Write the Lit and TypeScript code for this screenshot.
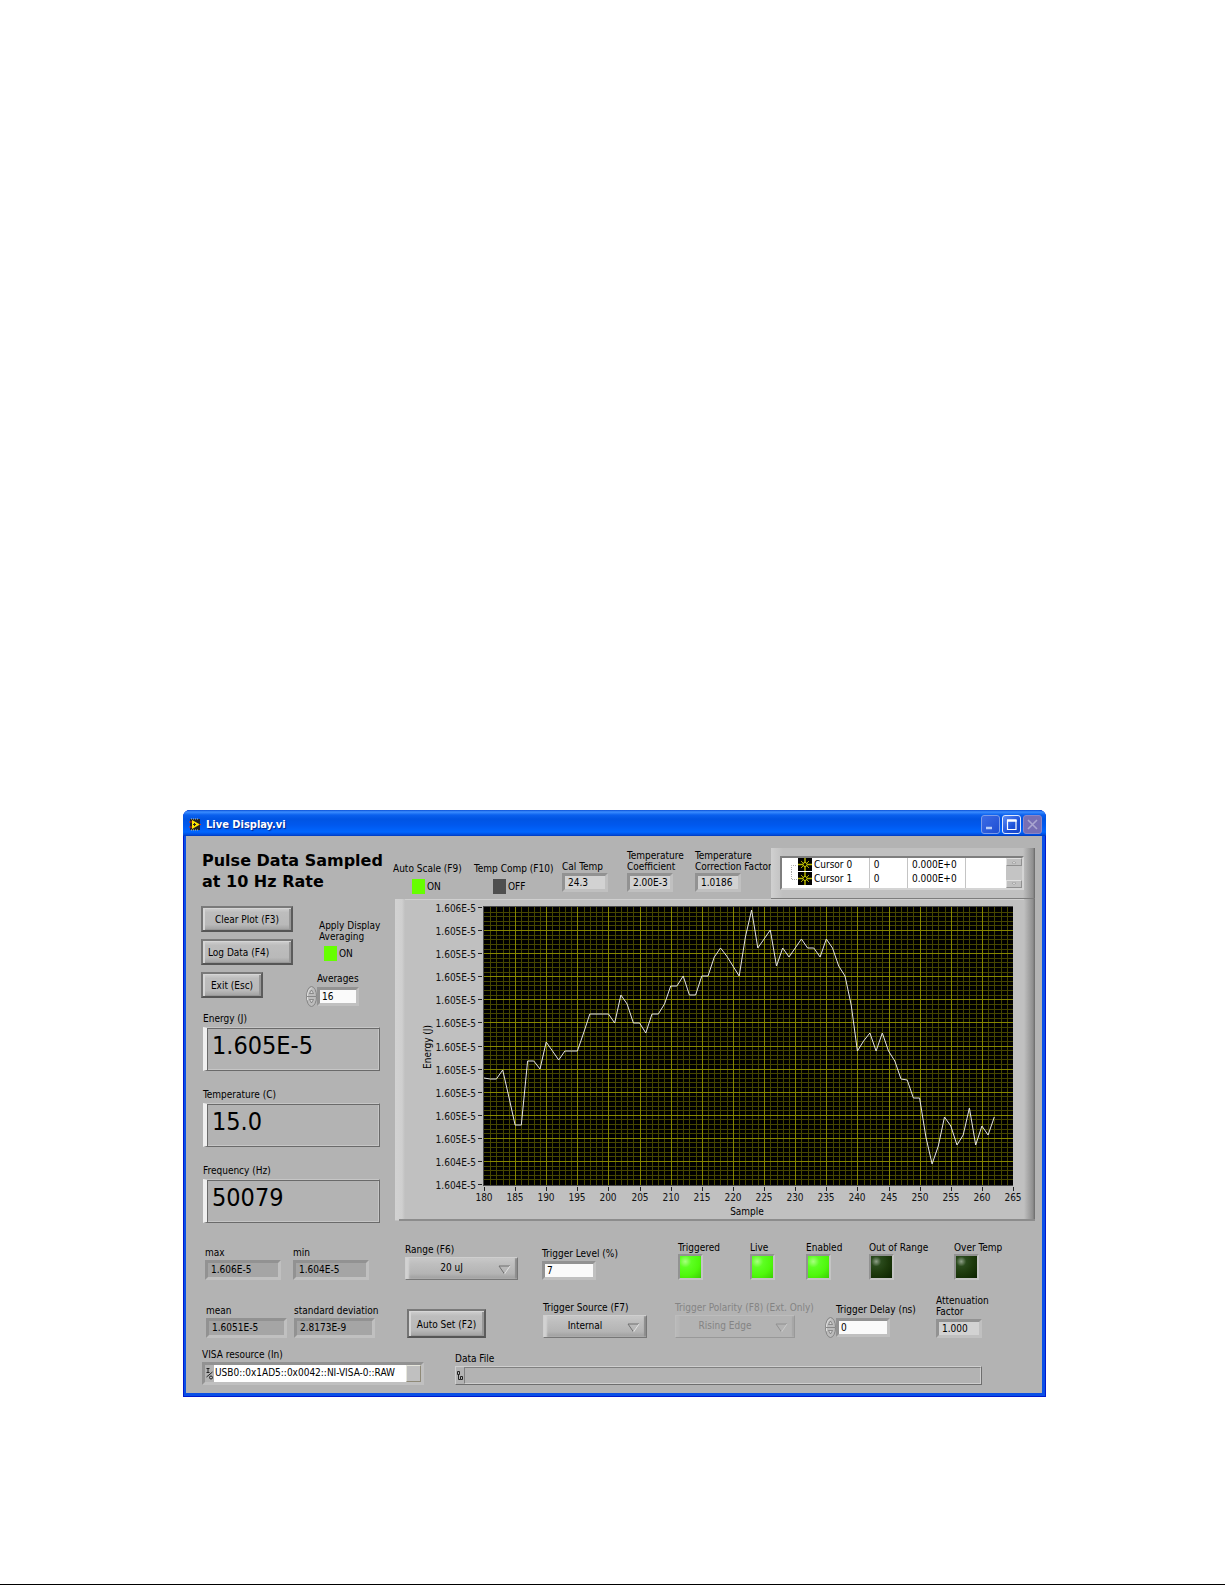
import { LitElement, html, svg, css, nothing } from "lit";
import { customElement, property } from "lit/decorators.js";

const SAMPLES: number[] = [
  179, 180, 180, 171, 198, 226, 226, 162, 162, 170, 143, 152, 161, 152, 152, 152, 134, 115, 115, 115,
  115, 124, 96, 105, 124, 124, 134, 115, 115, 105, 87, 87, 77, 96, 96, 77, 77, 58, 49, 57,
  67, 77, 38, 11, 49, 40, 31, 67, 49, 58, 49, 40, 49, 49, 58, 40, 49, 67, 77, 106,
  152, 142, 134, 152, 134, 152, 162, 180, 181, 199, 199, 238, 265, 247, 218, 227, 246, 236, 209, 246,
  227, 236, 218,
];

const Y_LABELS = [
  "1.606E-5", "1.605E-5", "1.605E-5", "1.605E-5", "1.605E-5", "1.605E-5", "1.605E-5",
  "1.605E-5", "1.605E-5", "1.605E-5", "1.605E-5", "1.604E-5", "1.604E-5",
];

const PLOT = { left: 89, right: 618, top: 8, bottom: 286 };

@customElement("energy-chart")
export class EnergyChart extends LitElement {
  static styles = css`
    :host { display: block; }
    .chart { display: block; width: 100%; height: auto; }
    .tick-label { font-family: "DejaVu Sans Condensed", "DejaVu Sans", sans-serif; font-size: 10px; fill: #111; }
    .axis-name { font-family: "DejaVu Sans Condensed", "DejaVu Sans", sans-serif; font-size: 10px; fill: #000; text-anchor: middle; }
    .end { text-anchor: end; }
    .middle { text-anchor: middle; }
    .minor { stroke: #464600; stroke-width: 1; shape-rendering: crispEdges; }
    .major { stroke: #868600; stroke-width: 1; shape-rendering: crispEdges; }
    .tick { stroke: #222; stroke-width: 1; shape-rendering: crispEdges; }
    .trace { fill: none; stroke: #e4e4e4; stroke-width: 1; stroke-linejoin: round; }
  `;

  private x(sample: number) {
    return PLOT.left + ((PLOT.right - PLOT.left) * (sample - 180)) / 85;
  }

  private y(step: number) {
    return PLOT.top + 1 + ((PLOT.bottom - PLOT.top - 1) * step) / 12;
  }

  render() {
    const columns = Array.from({ length: 86 }, (_, i) => i);
    const rows = Array.from({ length: 61 }, (_, i) => i);
    const snap = (v: number) => Math.round(v) + 0.5;
    const vertical = (i: number, cls: string) =>
      svg`<line class=${cls} x1=${snap(this.x(180 + i))} x2=${snap(this.x(180 + i))} y1=${PLOT.top} y2=${PLOT.bottom}></line>`;
    const horizontal = (i: number, cls: string) =>
      svg`<line class=${cls} y1=${snap(this.y(i / 5)) - 1} y2=${snap(this.y(i / 5)) - 1} x1=${PLOT.left} x2=${PLOT.right}></line>`;
    const inner = columns.filter((i) => i > 0 && i < 85);
    const innerRows = rows.filter((i) => i > 0 && i < 60);
    return html`
      <svg class="chart" viewBox="0 0 640 322" role="img" aria-label="Energy (J) by Sample">
        <defs>
          <linearGradient id="left-edge"><stop offset="0" stop-color="#d2d2d2"></stop><stop offset=".7" stop-color="#cfcfcf"></stop><stop offset="1" stop-color="#c0c0c0"></stop></linearGradient>
          <linearGradient id="right-edge"><stop offset="0" stop-color="#c0c0c0"></stop><stop offset=".8" stop-color="#8e8e8e"></stop><stop offset="1" stop-color="#6a6a6a"></stop></linearGradient>
        </defs>
        <rect width="640" height="322" fill="#c0c0c0"></rect>
        <rect width="640" height="1" fill="#d0d0d0"></rect>
        <rect width="10" height="321" fill="url(#left-edge)"></rect>
        <rect x="629" width="11" height="322" fill="url(#right-edge)"></rect>
        <rect x="4" y="320" width="636" height="2" fill="#8c8c8c"></rect>
        <rect x=${PLOT.left - 1} y=${PLOT.top - 1} width="530" height="280" fill="#4c4c4c"></rect>
        <rect x=${PLOT.left} y=${PLOT.top} width="529" height="278" fill="#000"></rect>
        ${inner.filter((i) => i % 5).map((i) => vertical(i, "minor"))}
        ${innerRows.filter((i) => i % 5).map((i) => horizontal(i, "minor"))}
        ${innerRows.filter((i) => i % 5 === 0).map((i) => horizontal(i, "major"))}
        ${inner.filter((i) => i % 5 === 0).map((i) => vertical(i, "major"))}
        <polyline class="trace" points=${SAMPLES.map((v, i) => `${this.x(180 + i).toFixed(1)},${v}`).join(" ")}></polyline>
        ${Y_LABELS.map(
          (label, i) => svg`
            <text class="tick-label end" x="81" y=${Math.round(this.y(i)) + 4}>${label}</text>
            <line class="tick" x1="83" x2="87" y1=${snap(this.y(i)) - 1} y2=${snap(this.y(i)) - 1}></line>`,
        )}
        ${columns.filter((i) => i % 5 === 0).map(
          (i) => svg`
            <text class="tick-label middle" x=${Math.round(this.x(180 + i))} y="302">${180 + i}</text>
            <line class="tick" x1=${snap(this.x(180 + i))} x2=${snap(this.x(180 + i))} y1="288" y2="292"></line>`,
        )}
        <text class="axis-name" x="352" y="316">Sample</text>
        <text class="axis-name" transform="translate(36 148) rotate(-90)">Energy (J)</text>
      </svg>
    `;
  }
}

@customElement("app-root")
export class AppRoot extends LitElement {
  @property() source = "USB0::0x1AD5::0x0042::NI-VISA-0::RAW";

  static styles = css`
    :host { display: block; }
    * { box-sizing: border-box; }
    .page {
      min-height: 100vh;
      padding: 810px 179px 0 183px;
      background: #fff;
      border-bottom: 1px solid #000;
      font-family: "DejaVu Sans Condensed", "DejaVu Sans", sans-serif;
      font-size: 10px;
      line-height: 11px;
      color: #000;
    }
    button, input, select, output { font: inherit; color: inherit; margin: 0; border-radius: 0; }
    label, .label { display: block; white-space: nowrap; }

    .window { background: #0a4fe6; border-radius: 7px 7px 0 0; overflow: hidden; box-shadow: inset 0 0 0 1px #0019cf; }
    .titlebar {
      display: flex; align-items: center; gap: 5px; height: 26px; padding: 3px 4px 0 6px;
      background: linear-gradient(#0a4fd6 0, #3b8dff 2px, #0a60ee 5px, #0054e3 9px, #0058ee 15px, #0066ff 22px, #0049d8 25px, #0038b8 26px);
      color: #fff;
    }
    .app-icon { width: 12px; height: 13px; flex: none; }
    .title { flex: 1; margin: 0; font-size: 11px; line-height: 14px; font-weight: bold; text-shadow: 1px 1px 1px #00248c; }
    .window-buttons { display: flex; gap: 2px; }
    .window-button {
      display: block; width: 19px; height: 19px; padding: 0; border: 1px solid #e2eafc; border-radius: 3px;
      background: linear-gradient(135deg, #5c8cf5, #1c50d8 60%, #1846c8);
    }
    .window-button.dim { border-color: #7d9ce8; background: linear-gradient(135deg, #3b6be6, #1f4ed2); }
    .window-button.off { border-color: #8b86c6; background: #776fb4; }
    .window-button svg { display: block; width: 17px; height: 17px; }

    .panel {
      margin: 0 4px 4px 3px; padding: 0 7px 8px 0; background: #b3b3b3;
      display: grid; grid-template-columns: 207px minmax(0, 1fr);
    }
    .readings { padding: 14px 12px 0 15px; }
    .heading { margin: 0 0 14px 1px; font-family: "DejaVu Sans", sans-serif; font-size: 16px; line-height: 21px; font-weight: bold; white-space: nowrap; }
    .actions { display: flex; gap: 13px; height: 107px; }
    .action-list { display: flex; flex-direction: column; align-items: flex-start; gap: 7px; }
    .push {
      height: 26px; padding: 1px 10px 0; text-align: center; white-space: nowrap;
      border: 2px solid; border-color: #7a7a7a #5c5c5c #555 #757575;
      background: linear-gradient(#d0d0d0, #bdbdbd 20%, #b9b9b9 75%, #a0a0a0);
      box-shadow: inset 2px 1px 0 #d6d6d6, inset -2px -1px 0 #979797;
    }
    .push.wide { width: 92px; }
    .push.start { text-align: left; padding: 1px 5px 0; }
    .push.short { width: 62px; padding: 1px 0 0; }
    .push.tall { width: 79px; height: 29px; margin-left: 2px; padding: 1px 0 0; }
    .averaging { padding-top: 14px; }
    .indent { padding-left: 13px; }
    .switch { display: flex; align-items: center; gap: 2px; margin-top: 4px; line-height: 12px; }
    .switch input { appearance: none; width: 13px; height: 15px; background: #4f4f4f; }
    .switch input:checked { background: #66ff00; }
    .averaging .switch { padding-left: 18px; margin-bottom: 12px; }
    .averaging .label-average { padding-left: 11px; margin-bottom: 2px; }

    .box {
      display: block; height: 19px; padding: 0 3px; line-height: 13px; white-space: nowrap;
      border: 3px solid; border-color: #929292 #c0c0c0 #c0c0c0 #929292; background: #d2d2d2;
    }
    .box.stat { height: 20px; line-height: 14px; width: 100%; background: #a5a5a5; }
    .box.small { width: 46px; }
    input.box { background: #fafafa; outline: none; padding: 0 2px; }
    .w42 { width: 42px; }
    .w54 { width: 54px; }
    .field { display: flex; flex-direction: column; align-items: flex-start; gap: 2px; min-width: 0; }
    .spinner { display: flex; align-items: center; }
    .spinner svg { width: 11px; height: 21px; flex: none; display: block; }
    .hang { padding-left: 11px; }

    .big-list { display: flex; flex-direction: column; gap: 18px; }
    .big { padding: 0 1px 0 2px; }
    .big output {
      display: block; height: 44px; margin-top: 3px; padding: 3px 5px; font-size: 25px; line-height: 30px;
      border: 1px solid; border-color: #c6c6c6 #6a6a6a #6a6a6a #c6c6c6;
      border-left: 4px solid #f0f0f0;
      box-shadow: inset 1px 1px 0 #6a6a6a, inset -1px -1px 0 #c6c6c6;
    }

    .top {
      display: grid; align-items: end; height: 63px; padding-top: 12px;
      grid-template-columns: minmax(0, 81fr) minmax(0, 88fr) minmax(0, 65fr) minmax(0, 68fr) minmax(0, 76fr) minmax(0, 264fr);
    }
    .top > .field { padding-bottom: 7px; gap: 1px; }
    .top > .toggle { display: block; padding-bottom: 5px; }
    .toggle .switch { padding-left: 19px; margin-top: 5px; }
    .cursors {
      padding: 8px 11px 9px 9px; height: 51px;
      border-bottom: 1px solid #7c7c7c;
      background: linear-gradient(90deg, #d0d0d0, #c0c0c0 12px, #c0c0c0 calc(100% - 12px), #8e8e8e calc(100% - 2px), #666);
    }
    .cursor-view { display: flex; height: 34px; background: #fff; border: 2px solid; border-color: #7e7e7e #d4d4d4 #d4d4d4 #7e7e7e; overflow: hidden; }
    .cursor-table { flex: 1; height: 31px; border-collapse: collapse; table-layout: fixed; width: 0; }
    .cursor-table td { padding: 0 0 0 4px; height: 14px; line-height: 13px; border-right: 1px solid #c4c4c4; white-space: nowrap; vertical-align: top; }
    .cursor-table td:last-child { border: 0; }
    .c-name { width: 39%; }
    .c-index { width: 17%; }
    .c-value { width: 26%; }
    .cursor-name { display: flex; gap: 2px; padding-left: 4px; }
    .cursor-name svg { width: 22px; height: 14px; flex: none; }
    .scroll { display: flex; flex-direction: column; justify-content: space-between; width: 16px; background: #c4c4c4; }
    .scroll button { height: 8px; padding: 0; border: 1px solid; border-color: #e0e0e0 #909090 #909090 #e0e0e0; background: #c0c0c0; }
    .scroll svg { display: block; width: 14px; height: 6px; }
    .plot { margin-left: 2px; }

    .stats { display: grid; align-self: end; padding: 0 18px 0 20px; gap: 7px; grid-template-columns: minmax(0, 1fr) minmax(0, 1fr); }
    .stats.upper { padding: 20px 24px 0 19px; gap: 12px; }
    .controls { display: grid; align-items: end; padding-left: 12px; }
    .row-a { min-height: 57px; grid-template-columns: minmax(0, 137fr) minmax(0, 136fr) minmax(0, 72fr) minmax(0, 56fr) minmax(0, 63fr) minmax(0, 85fr) minmax(0, 81fr); }
    .row-b { min-height: 58px; grid-template-columns: minmax(0, 138fr) minmax(0, 132fr) minmax(0, 150fr) minmax(0, 111fr) minmax(0, 99fr); }
    .lamp { width: 25px; height: 26px; border: 2px solid; border-color: #929292 #c4c4c4 #c4c4c4 #929292; }
    .lamp.on { background: radial-gradient(circle at 25% 25%, #a8ff80 0, #5dff22 6px, #4ff80c 14px, #38c800 24px); }
    .lamp.off { background: radial-gradient(circle at 25% 25%, #8fa088 0, #2a4a1c 5px, #1d3a0c 12px, #0c2400 22px); }
    .lamp-field { gap: 1px; }
    .dropdown { display: grid; width: 113px; }
    .dropdown.w104 { width: 104px; }
    .dropdown.w120 { width: 120px; }
    .dropdown > * { grid-area: 1 / 1; }
    .dropdown select {
      appearance: none; width: 100%; height: 23px; padding: 0 20px 3px 0; text-align: center; text-align-last: center;
      border: 1px solid; border-color: #cfcfcf #777 #777 #cfcfcf;
      background: linear-gradient(#c8c8c8, #bebebe 30%, #b4b4b4 75%, #9c9c9c);
      box-shadow: inset 3px 0 2px #d2d2d2, inset -2px 0 1px #8c8c8c; opacity: 1;
    }
    .dropdown svg { width: 13px; height: 10px; justify-self: end; align-self: center; margin: 2px 7px 0 0; pointer-events: none; }
    .disabled { color: #848484; }
    .disabled select { border-color: #bdbdbd #999 #999 #bdbdbd; background: #b3b3b3; box-shadow: inset 3px 0 2px #b9b9b9, inset -2px 0 1px #a6a6a6; }
    .disabled svg { opacity: .5; }
    .visa { padding: 11px 0 0 16px; width: 238px; }
    .visa-box { display: flex; width: 100%; height: 23px; border: 3px solid; border-color: #929292 #c0c0c0 #c0c0c0 #929292; background: #b3b3b3; }
    .visa-box svg { width: 9px; height: 17px; flex: none; }
    .visa-box input { flex: 1; min-width: 0; border: 0; padding: 0 0 2px 1px; background: #fff; outline: none; }
    .visa-box button { width: 15px; padding: 0; border: 1px solid; border-color: #e6e6dc #8f8a78 #8f8a78 #e6e6dc; background: #c0c0c0; }
    .file { padding: 0 53px 0 62px; align-self: end; }
    .file .field { align-items: stretch; }
    .file-box { display: flex; height: 19px; border: 1px solid; border-color: #cfcfcf #6e6e6e #6e6e6e #cfcfcf; }
    .file-box svg { width: 8px; height: 17px; flex: none; }
    .file-box output { flex: 1; border: 1px solid; border-color: #808080 #cfcfcf #cfcfcf #808080; }
  `;

  private readout(id: string, label: unknown, value: string, kind: string) {
    return html`<div class="field">
      <label for=${id}>${label}</label>
      <output class="box ${kind}" id=${id}>${value}</output>
    </div>`;
  }

  private big(id: string, label: string, value: string) {
    return html`<div class="big"><label for=${id}>${label}</label><output id=${id}>${value}</output></div>`;
  }

  private lamp(label: string, on: boolean) {
    return html`<div class="field lamp-field">
      <span class="label">${label}</span>
      <div class="lamp ${on ? "on" : "off"}" role="img" aria-label=${label}></div>
    </div>`;
  }

  private dropdown(id: string, label: string, value: string, width: string, disabled = false) {
    return html`<div class="field ${disabled ? "disabled" : ""}">
      <label for=${id}>${label}</label>
      <div class="dropdown ${width}">
        <select id=${id} ?disabled=${disabled}><option>${value}</option></select>
        <svg viewBox="0 0 13 10" fill="none"><path d="M1 1h11" stroke="#707070"></path><path d="M1 1l5.500 8" stroke="#707070"></path><path d="M12 1l-5.500 8" stroke="#e2e2e2"></path></svg>
      </div>
    </div>`;
  }

  private toggle(id: string, label: string, on: boolean) {
    return html`<div class="field toggle">
      <label for=${id}>${label}</label>
      <div class="switch"><input type="checkbox" id=${id} .checked=${on} /><span>${on ? "ON" : "OFF"}</span></div>
    </div>`;
  }

  private spinner() {
    return html`<svg viewBox="0 0 11 21" aria-hidden="true">
      <ellipse cx="5.500" cy="10.500" rx="5" ry="10" fill="#bcbcbc" stroke="#858585"></ellipse>
      <path d="M1.500 14V8q1-5 4-6" stroke="#dedede" fill="none"></path>
      <path d="M1 10.500h9" stroke="#888"></path>
      <path d="M3.500 7.500L5.500 4l2 3.500zM3.500 13.500h4L5.500 17z" fill="#d8d8d8" stroke="#707070" stroke-width=".7"></path>
    </svg>`;
  }

  private cursorRow(name: string, last: boolean) {
    return html`<tr>
      <td class="c-name"><div class="cursor-name">
        <svg viewBox="0 0 22 14" aria-hidden="true">
          <path d=${last ? "M1.500 0v7.500H7" : "M1.500 14V7.500H7"} stroke="#aaa" stroke-dasharray="1 1" fill="none"></path>
          <rect x="8" width="14" height="13" fill="#000"></rect>
          <path d="M8 6.500h5M17 6.500h5M15 0v4.500M15 8.500V13" stroke="#b4b400" stroke-width="1.500"></path>
          <path d="M11 3l2 2M19 3l-2 2M11 10l2-2M19 10l-2-2" stroke="#a8a800"></path>
          <circle cx="15" cy="6.500" r="2" fill="none" stroke="#d6d600"></circle>
        </svg><span>${name}</span></div></td>
      <td class="c-index">0</td><td class="c-value">0.000E+0</td><td></td>
    </tr>`;
  }

  render() {
    return html`
      <div class="page">
        <main class="window">
          <header class="titlebar">
            <svg class="app-icon" viewBox="0 0 12 13" aria-hidden="true">
              <rect x="1" y="1" width="10" height="11" fill="#222"></rect>
              <path d="M2 1h8M2 12h8" stroke="#c8c8a0" stroke-dasharray="1 1"></path>
              <path d="M3 2l8 4.500L3 11z" fill="#ffe600"></path>
              <path d="M0 4h3M0 9h3M10 6.500h2" stroke="#d03020"></path>
              <path d="M4 6.500h3M5.500 5v3" stroke="#222"></path>
            </svg>
            <h1 class="title">Live Display.vi</h1>
            <div class="window-buttons">
              <button class="window-button dim" aria-label="Minimize"><svg viewBox="0 0 17 17"><path d="M4 12h6" stroke="#b8ccf8" stroke-width="2.500"></path></svg></button>
              <button class="window-button" aria-label="Maximize"><svg viewBox="0 0 17 17"><path d="M4.500 4v9.500h8.500V4" fill="none" stroke="#fff" stroke-width="1.200"></path><path d="M4 4.500h9.600" stroke="#fff" stroke-width="2.500"></path></svg></button>
              <button class="window-button off" aria-label="Close" disabled><svg viewBox="0 0 17 17"><path d="M4 4l9 9M13 4l-9 9" stroke="#aaa6d0" stroke-width="1.600"></path></svg></button>
            </div>
          </header>
          <div class="panel">
            <section class="readings">
              <h2 class="heading">Pulse Data Sampled<br />at 10 Hz Rate</h2>
              <div class="actions">
                <div class="action-list">
                  <button class="push wide">Clear Plot (F3)</button>
                  <button class="push wide start">Log Data (F4)</button>
                  <button class="push short">Exit (Esc)</button>
                </div>
                <div class="averaging">
                  <label class="indent" for="averaging">Apply Display<br />Averaging</label>
                  <div class="switch"><input type="checkbox" id="averaging" .checked=${true} /><span>ON</span></div>
                  <label class="label-average" for="averages">Averages</label>
                  <div class="spinner">${this.spinner()}<input class="box w42" id="averages" .value=${"16"} /></div>
                </div>
              </div>
              <div class="big-list">
                ${this.big("energy", "Energy (J)", "1.605E-5")}
                ${this.big("temperature", "Temperature (C)", "15.0")}
                ${this.big("frequency", "Frequency (Hz)", "50079")}
              </div>
            </section>
            <section>
              <div class="top">
                ${this.toggle("auto-scale", "Auto Scale (F9)", true)}
                ${this.toggle("temp-comp", "Temp Comp (F10)", false)}
                ${this.readout("cal-temp", "Cal Temp", "24.3", "small")}
                ${this.readout("coefficient", html`Temperature<br />Coefficient`, "2.00E-3", "small")}
                ${this.readout("correction", html`Temperature<br />Correction Factor`, "1.0186", "small")}
                <div class="cursors">
                  <div class="cursor-view">
                    <table class="cursor-table"><tbody>
                      ${this.cursorRow("Cursor 0", false)}${this.cursorRow("Cursor 1", true)}
                      <tr><td></td><td></td><td></td><td></td></tr>
                    </tbody></table>
                    <div class="scroll">
                      <button aria-label="Scroll up"><svg viewBox="0 0 14 6"><path d="M5 4l2-2 2 2z" fill="#eee" stroke="#888" stroke-width=".5"></path></svg></button>
                      <button aria-label="Scroll down"><svg viewBox="0 0 14 6"><path d="M5 2l2 2 2-2z" fill="#eee" stroke="#888" stroke-width=".5"></path></svg></button>
                    </div>
                  </div>
                </div>
              </div>
              <energy-chart class="plot"></energy-chart>
            </section>

            <div class="stats upper">
              ${this.readout("max", "max", "1.606E-5", "stat")} ${this.readout("min", "min", "1.604E-5", "stat")}
            </div>
            <div class="controls row-a">
              ${this.dropdown("range", "Range (F6)", "20 uJ", "")}
              <div class="field"><label for="level">Trigger Level (%)</label><input class="box w54" id="level" .value=${"7"} /></div>
              ${this.lamp("Triggered", true)} ${this.lamp("Live", true)} ${this.lamp("Enabled", true)}
              ${this.lamp("Out of Range", false)} ${this.lamp("Over Temp", false)}
            </div>

            <div class="stats">
              ${this.readout("mean", "mean", "1.6051E-5", "stat")}
              ${this.readout("deviation", "standard deviation", "2.8173E-9", "stat")}
            </div>
            <div class="controls row-b">
              <button class="push tall">Auto Set (F2)</button>
              ${this.dropdown("trigger-source", "Trigger Source (F7)", "Internal", "w104")}
              ${this.dropdown("polarity", "Trigger Polarity (F8) (Ext. Only)", "Rising Edge", "w120", true)}
              <div class="field"><label class="hang" for="delay">Trigger Delay (ns)</label>
                <div class="spinner">${this.spinner()}<input class="box w54" id="delay" .value=${"0"} /></div></div>
              ${this.readout("attenuation", html`Attenuation<br />Factor`, "1.000", "small")}
            </div>

            <div class="visa">
              <div class="field">
                <label for="visa">VISA resource (In)</label>
                <div class="visa-box">
                  <svg viewBox="0 0 8 17" fill="none" stroke="#222" aria-hidden="true"><path d="M1 3.500h3M2.500 3.500v4M1 7.500h3M1 12l6-5"></path><circle cx="5.500" cy="12.500" r="1.500"></circle></svg>
                  <input id="visa" .value=${this.source} />
                  <button aria-label="Choose resource"></button>
                </div>
              </div>
            </div>
            <div class="file">
              <div class="field">
                <label for="data-file">Data File</label>
                <div class="file-box">
                  <svg viewBox="0 0 8 17" fill="none" stroke="#222" aria-hidden="true"><path d="M1.500 4.500h2v3h-2zM2.500 7.500v5h2M4.500 9.500h2v3h-2z"></path></svg>
                  <output id="data-file">${nothing}</output>
                </div>
              </div>
            </div>
          </div>
        </main>
      </div>
    `;
  }
}
